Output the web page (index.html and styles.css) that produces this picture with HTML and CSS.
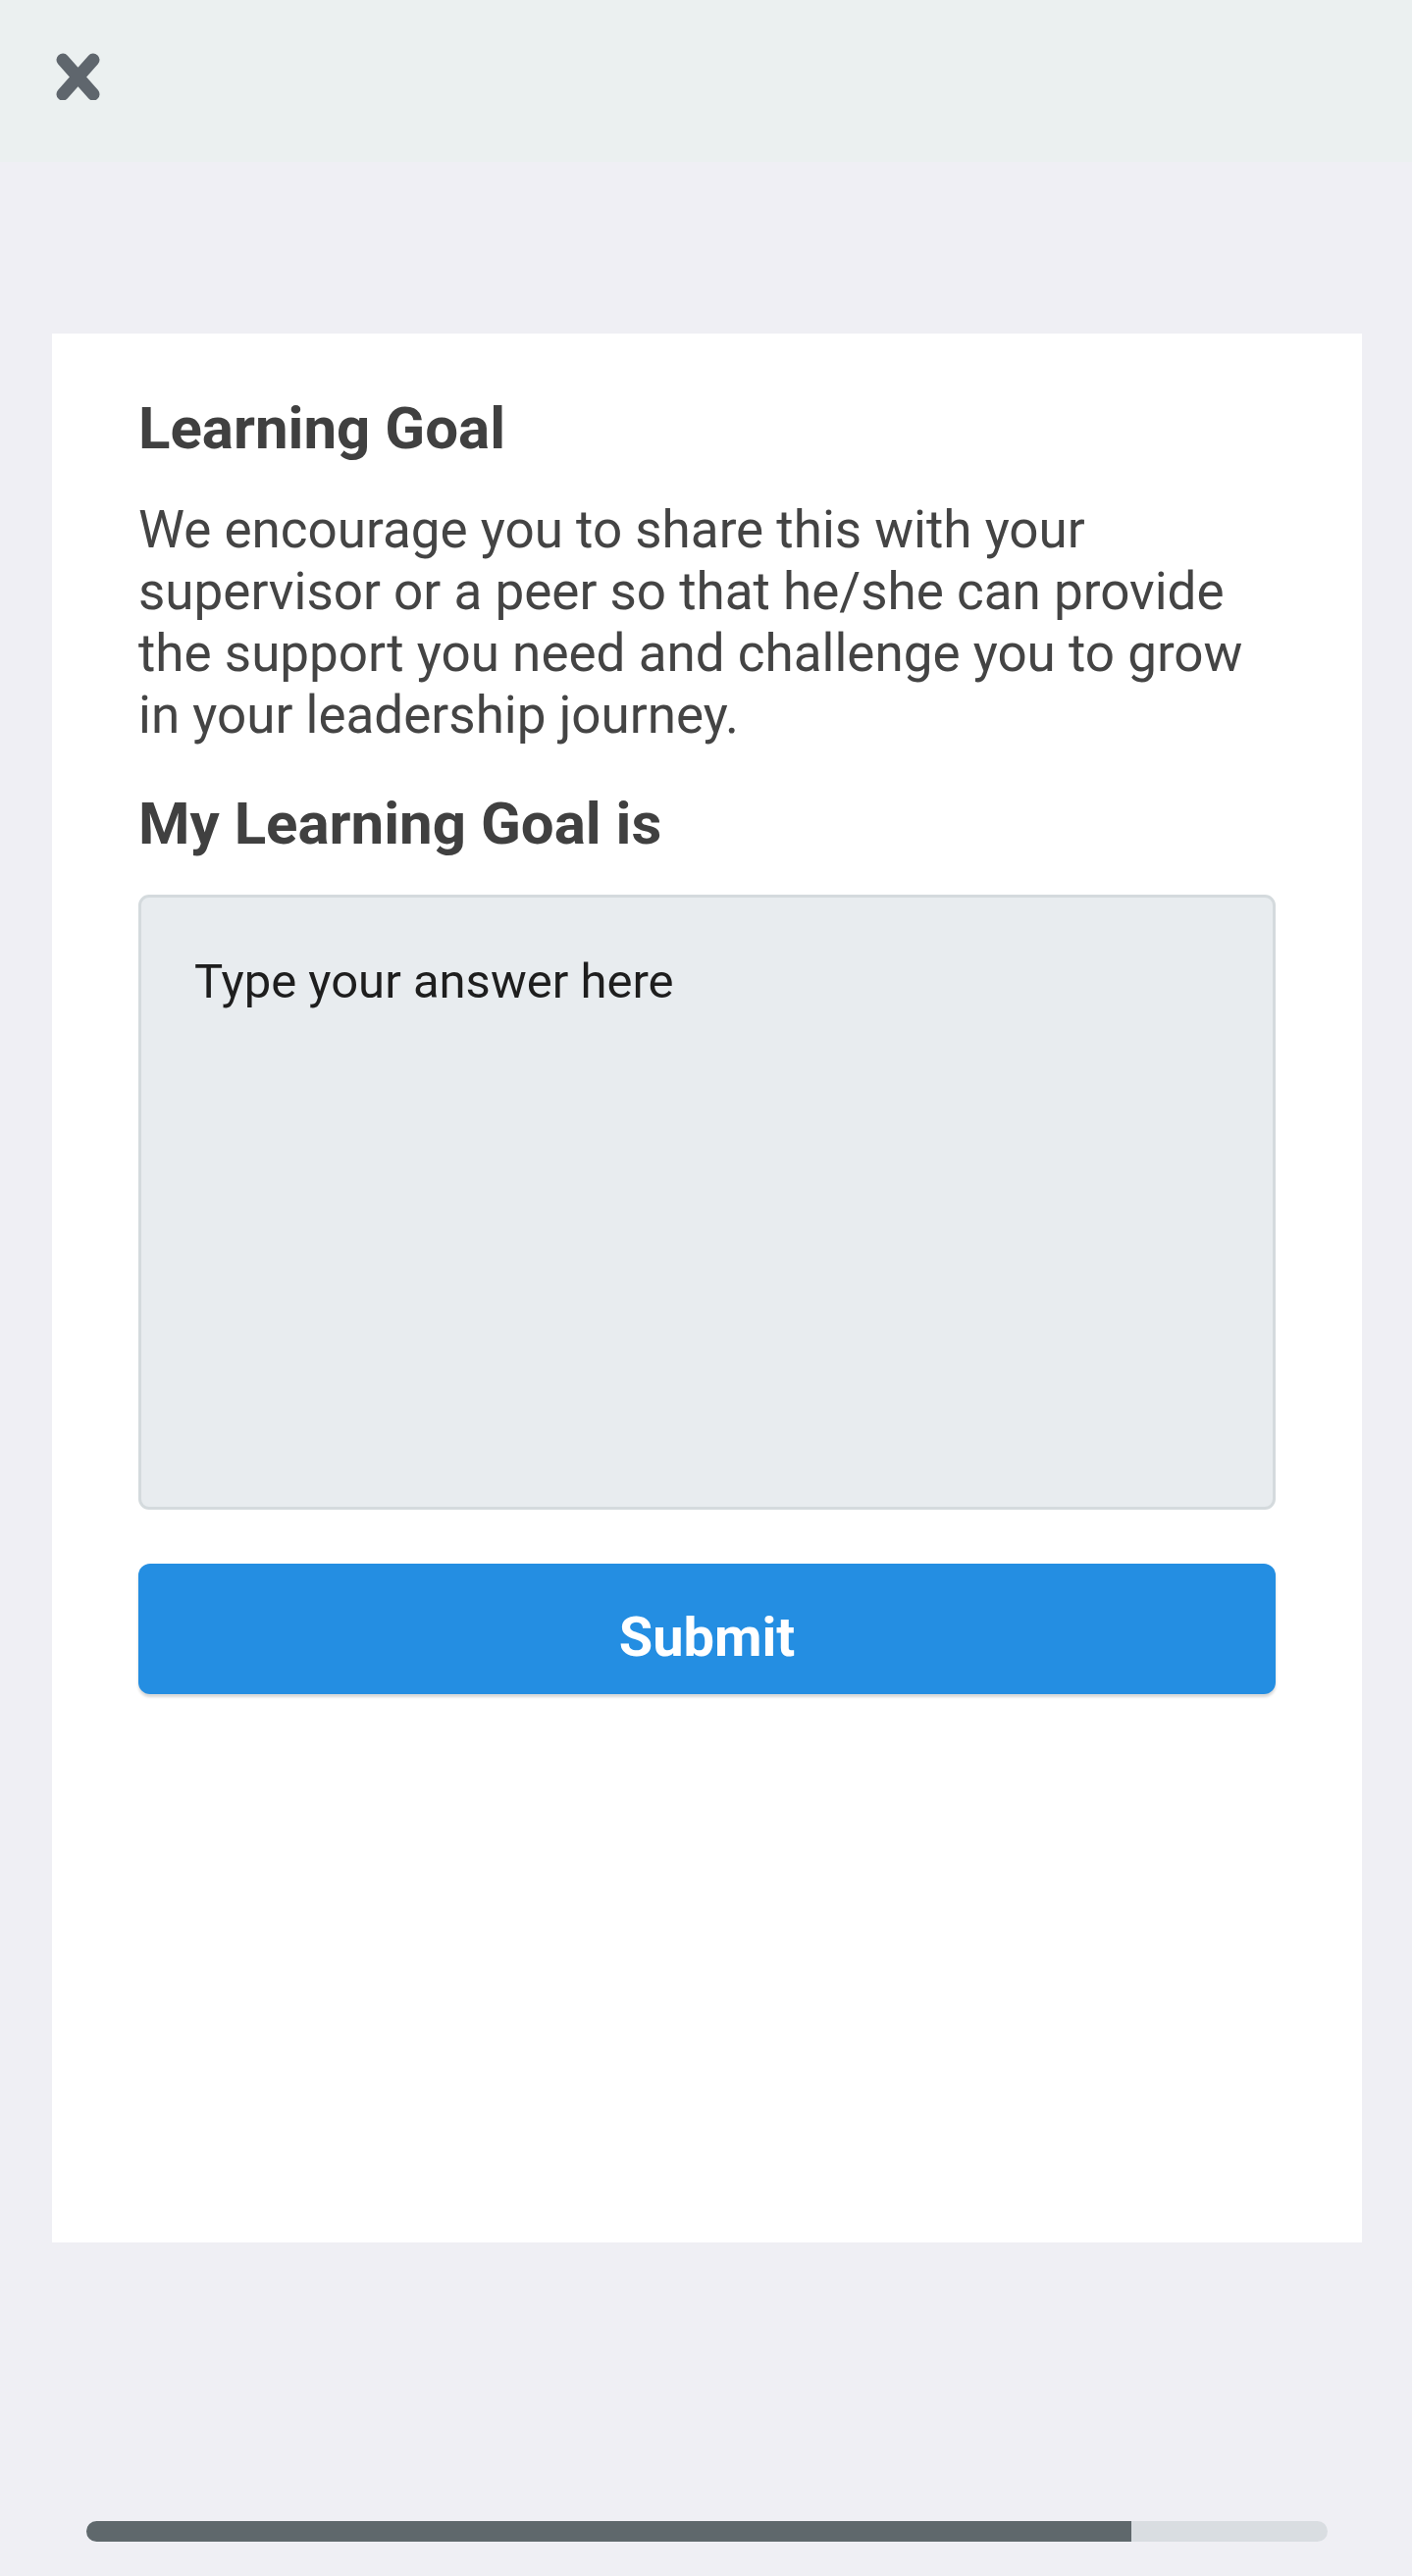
FILE: index.html
```html
<!DOCTYPE html>
<html lang="en">
<head>
<meta charset="utf-8">
<title>Learning Goal</title>
<link rel="stylesheet" href="styles.css">
</head>
<body>
<header class="topbar">
  <button class="close" aria-label="Close">
    <svg width="48" height="48" viewBox="0 0 48 48" aria-hidden="true">
      <path d="M9 7 L40 42 M40 7 L9 42" stroke="#5f666d" stroke-width="13" stroke-linecap="round" fill="none"/>
    </svg>
  </button>
</header>
<main class="page">
  <section class="card">
    <h1 class="title">Learning Goal</h1>
    <p class="intro">We encourage you to share this with your supervisor or a peer so that he/she can provide the support you need and challenge you to grow in your leadership journey.</p>
    <h2 class="subtitle">My Learning Goal is</h2>
    <textarea class="answer" placeholder="Type your answer here"></textarea>
    <button class="submit">Submit</button>
  </section>
  <div class="progress">
    <div class="progress-fill" style="width: 84.2%"></div>
  </div>
</main>
</body>
</html>
```
FILE: styles.css
```css
* { box-sizing: border-box; }
html, body { margin: 0; padding: 0; }
body {
  background: #efeff4;
  font-family: Roboto, "Liberation Sans", sans-serif;
  width: 1439px;
  height: 2626px;
  overflow: hidden;
}
.topbar {
  height: 165px;
  background: #ebf0f0;
  padding: 54px 0 0 55px;
}
.close {
  display: block;
  width: 48px;
  height: 48px;
  padding: 0;
  margin: 0;
  border: 0;
  background: none;
}
.close svg { display: block; }
.page {
  padding: 175px 51px 0 53px;
}
.card {
  background: #ffffff;
  height: 1946px;
  padding: 62px 88px 0 88px;
}
.title, .subtitle {
  margin: 0;
  font-size: 60px;
  line-height: 70px;
  font-weight: 700;
  color: #404040;
}
.intro {
  margin: 37px 0 0;
  font-size: 53px;
  line-height: 63px;
  color: #444444;
  font-weight: 400;
}
.subtitle { margin-top: 44px; }
.answer {
  display: block;
  width: 100%;
  height: 627px;
  margin: 37px 0 0;
  padding: 57px 54px;
  border: 3px solid #d4dadd;
  border-radius: 11px;
  background: #e8ecef;
  font-family: Roboto, "Liberation Sans", sans-serif;
  font-size: 49px;
  line-height: 58px;
  color: #1e1e1e;
  resize: none;
  outline: none;
}
.answer::placeholder { color: #1e1e1e; opacity: 1; }
.submit {
  display: block;
  width: 100%;
  height: 133px;
  margin: 55px 0 0;
  padding: 18px 0 0;
  border: 0;
  border-radius: 12px;
  background: #248ee2;
  color: #ffffff;
  font-family: Roboto, "Liberation Sans", sans-serif;
  font-size: 56px;
  font-weight: 700;
  line-height: 115px;
  box-shadow: 0 3px 3px rgba(0, 0, 0, 0.16);
}
.progress {
  margin: 284px 0 0 35px;
  width: 1265px;
  height: 21px;
  border-radius: 11px;
  background: #d9dde1;
  overflow: hidden;
}
.progress-fill {
  height: 100%;
  background: #5f686c;
}
```
